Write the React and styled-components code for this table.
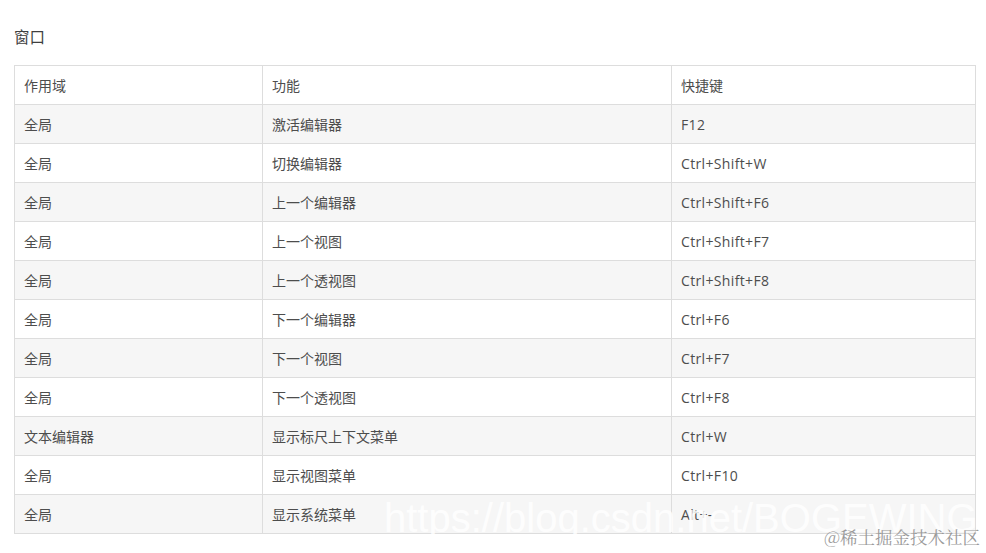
import React from "react";
import styled, { createGlobalStyle } from "styled-components";

const rows = [
  ["全局", "激活编辑器", "F12"],
  ["全局", "切换编辑器", "Ctrl+Shift+W"],
  ["全局", "上一个编辑器", "Ctrl+Shift+F6"],
  ["全局", "上一个视图", "Ctrl+Shift+F7"],
  ["全局", "上一个透视图", "Ctrl+Shift+F8"],
  ["全局", "下一个编辑器", "Ctrl+F6"],
  ["全局", "下一个视图", "Ctrl+F7"],
  ["全局", "下一个透视图", "Ctrl+F8"],
  ["文本编辑器", "显示标尺上下文菜单", "Ctrl+W"],
  ["全局", "显示视图菜单", "Ctrl+F10"],
  ["全局", "显示系统菜单", "Alt+-"],
];

const App = () => {
  return (
    <Page>
      <GlobalStyle />
      <Title>窗口</Title>
      <Table>
        <colgroup>
          <col style={{ width: 248 }} />
          <col style={{ width: 409 }} />
          <col />
        </colgroup>
        <thead>
          <Row>
            <Cell as="th">作用域</Cell>
            <Cell as="th">功能</Cell>
            <Cell as="th">快捷键</Cell>
          </Row>
        </thead>
        <tbody>
          {rows.map((r, i) => (
            <Row key={i} $striped={i % 2 === 0}>
              <Cell>{r[0]}</Cell>
              <Cell>{r[1]}</Cell>
              <Cell $keys>{r[2]}</Cell>
            </Row>
          ))}
        </tbody>
      </Table>
      <UrlMark>https://blog.csdn.net/BOGEWING</UrlMark>
      <SiteMark>@稀土掘金技术社区</SiteMark>
    </Page>
  );
};

export default App;

const GlobalStyle = createGlobalStyle`
  body {
    margin: 0;
    background: #fff;
    font-family: "Open Sans", "Noto Sans CJK SC", sans-serif;
    color: #4d4d4d;
  }
`;

const Page = styled.div`
  position: relative;
  width: 986px;
  height: 553px;
  overflow: hidden;
  padding: 26px 10px 0 14px;
  box-sizing: border-box;
`;

const Title = styled.h3`
  margin: 0 0 17px;
  font-size: 15.5px;
  font-weight: 400;
  line-height: 22px;
  color: #3f3f3f;
`;

const Table = styled.table`
  width: 962px;
  border-collapse: collapse;
  table-layout: fixed;
`;

const Row = styled.tr`
  background: ${(p) => (p.$striped ? "#f6f6f6" : "#fff")};
`;

const Cell = styled.td`
  height: 38px;
  padding: 0 9px;
  border: 1px solid #dddddd;
  font-size: 14px;
  font-weight: 400;
  letter-spacing: ${(p) => (p.$keys ? "0.35px" : "0")};
  text-align: left;
  color: #4d4d4d;
  white-space: nowrap;
`;

const UrlMark = styled.div`
  position: absolute;
  left: 384px;
  top: 494px;
  font-family: "Liberation Sans", Arial, sans-serif;
  font-size: 40px;
  line-height: 48px;
  color: rgba(255, 255, 255, 0.85);
  white-space: nowrap;
`;

const SiteMark = styled.div`
  position: absolute;
  right: 6px;
  top: 525px;
  font-family: "Noto Serif CJK SC", "Noto Sans CJK SC", serif;
  font-size: 17.5px;
  line-height: 24px;
  color: #9a9a9a;
  white-space: nowrap;
`;
